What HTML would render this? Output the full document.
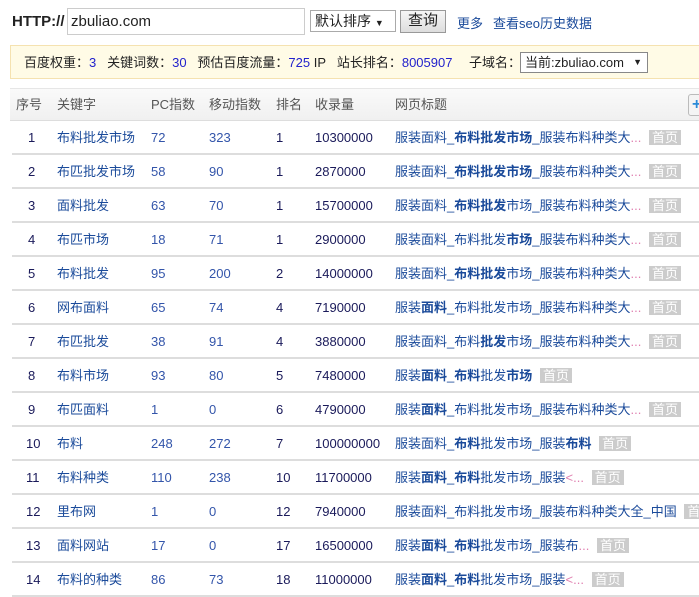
<!DOCTYPE html>
<html><head><meta charset="utf-8"><style>
*{margin:0;padding:0;box-sizing:border-box}
body{width:699px;height:582px;overflow:hidden;background:#fff;font-family:"Liberation Sans","Noto Sans CJK SC",sans-serif;font-size:13px;position:relative;color:#222}
.a{position:absolute;white-space:nowrap}
.lnk{color:#1a4a9a}
.bar{position:absolute;left:10px;top:45px;width:700px;height:34px;background:#fffbe6;border:1px solid #f5e2b0}
.hd{position:absolute;left:10px;top:88px;width:700px;height:33px;background:linear-gradient(#fafafa,#f0f0f0);border-top:1px solid #e6e6e6;border-bottom:1px solid #ddd;color:#555}
.row{position:absolute;left:12px;width:700px;height:34px;border-bottom:2px solid #ddd}
.row span{position:absolute;top:9px;white-space:nowrap}
.row span.k,.row span.t{top:6px}
.n{color:#1a1a5a}.k{color:#1a4a9a}.p{color:#3355aa}.r{color:#1a1a5a}
.t{color:#1a4a9a}.t b{font-weight:bold}
.bd{background:#ccc;color:#fff;padding:0 3px;margin-left:4px;font-size:13px;font-style:normal}
.dt{color:#e080b0;font-style:normal}
</style></head><body>
<div class="a" style="left:12px;top:13px;font-weight:bold;font-size:15px">HTTP://</div>
<div class="a" style="left:67px;top:8px;width:238px;height:27px;border:1px solid #ccc;padding:4px 3px;font-size:15px">zbuliao.com</div>
<div class="a" style="left:310px;top:10px;width:86px;height:22px;border:1px solid #aaa;padding:0 4px;font-size:14px;line-height:20px">默认排序 <span style="font-size:9px">▼</span></div>
<div class="a" style="left:400px;top:10px;width:46px;height:23px;border:1px solid #999;background:linear-gradient(#f6f6f6,#ddd);text-align:center;font-size:15px;line-height:20px">查询</div>
<div class="a lnk" style="left:457px;top:13px">更多</div>
<div class="a lnk" style="left:493px;top:13px">查看seo历史数据</div>
<div class="bar"></div>
<div class="a" style="left:24px;top:52px">百度权重：<span style="color:#22c">3</span>&nbsp;&nbsp; 关键词数：<span style="color:#22c">30</span>&nbsp;&nbsp; 预估百度流量：<span style="color:#22c">725</span> IP&nbsp;&nbsp; 站长排名：<span style="color:#22c">8005907</span></div>
<div class="a" style="left:469px;top:52px">子域名：</div>
<div class="a" style="left:520px;top:52px;width:128px;height:21px;border:1px solid #888;background:#fff;padding:0 4px;line-height:19px">当前:zbuliao.com <span style="position:absolute;right:5px;top:0;font-size:9px">▼</span></div>
<div class="hd"></div>
<div class="a" style="left:16px;top:94px;color:#555">序号</div>
<div class="a" style="left:57px;top:94px;color:#555">关键字</div>
<div class="a" style="left:151px;top:94px;color:#555">PC指数</div>
<div class="a" style="left:209px;top:94px;color:#555">移动指数</div>
<div class="a" style="left:276px;top:94px;color:#555">排名</div>
<div class="a" style="left:315px;top:94px;color:#555">收录量</div>
<div class="a" style="left:395px;top:94px;color:#555">网页标题</div>
<div class="a" style="left:688px;top:94px;width:20px;height:22px;border:1px solid #bbb;border-radius:3px;background:#f4f4f4;color:#2a8ad8;font-weight:bold;font-size:16px;line-height:20px;padding-left:3px">+</div>
<div class="row" style="top:121px"><span class="n" style="left:16px">1</span><span class="k" style="left:45px">布料批发市场</span><span class="p" style="left:139px">72</span><span class="p" style="left:197px">323</span><span class="r" style="left:264px">1</span><span class="r" style="left:303px">10300000</span><span class="t" style="left:383px">服装面料_<b>布料批发市场</b>_服装布料种类大<i class="dt">...</i> <i class="bd">首页</i></span></div>
<div class="row" style="top:155px"><span class="n" style="left:16px">2</span><span class="k" style="left:45px">布匹批发市场</span><span class="p" style="left:139px">58</span><span class="p" style="left:197px">90</span><span class="r" style="left:264px">1</span><span class="r" style="left:303px">2870000</span><span class="t" style="left:383px">服装面料_<b>布料批发市场</b>_服装布料种类大<i class="dt">...</i> <i class="bd">首页</i></span></div>
<div class="row" style="top:189px"><span class="n" style="left:16px">3</span><span class="k" style="left:45px">面料批发</span><span class="p" style="left:139px">63</span><span class="p" style="left:197px">70</span><span class="r" style="left:264px">1</span><span class="r" style="left:303px">15700000</span><span class="t" style="left:383px">服装面料_<b>布料批发</b>市场_服装布料种类大<i class="dt">...</i> <i class="bd">首页</i></span></div>
<div class="row" style="top:223px"><span class="n" style="left:16px">4</span><span class="k" style="left:45px">布匹市场</span><span class="p" style="left:139px">18</span><span class="p" style="left:197px">71</span><span class="r" style="left:264px">1</span><span class="r" style="left:303px">2900000</span><span class="t" style="left:383px">服装面料_布料批发<b>市场</b>_服装布料种类大<i class="dt">...</i> <i class="bd">首页</i></span></div>
<div class="row" style="top:257px"><span class="n" style="left:16px">5</span><span class="k" style="left:45px">布料批发</span><span class="p" style="left:139px">95</span><span class="p" style="left:197px">200</span><span class="r" style="left:264px">2</span><span class="r" style="left:303px">14000000</span><span class="t" style="left:383px">服装面料_<b>布料批发</b>市场_服装布料种类大<i class="dt">...</i> <i class="bd">首页</i></span></div>
<div class="row" style="top:291px"><span class="n" style="left:16px">6</span><span class="k" style="left:45px">网布面料</span><span class="p" style="left:139px">65</span><span class="p" style="left:197px">74</span><span class="r" style="left:264px">4</span><span class="r" style="left:303px">7190000</span><span class="t" style="left:383px">服装<b>面料</b>_布料批发市场_服装布料种类大<i class="dt">...</i> <i class="bd">首页</i></span></div>
<div class="row" style="top:325px"><span class="n" style="left:16px">7</span><span class="k" style="left:45px">布匹批发</span><span class="p" style="left:139px">38</span><span class="p" style="left:197px">91</span><span class="r" style="left:264px">4</span><span class="r" style="left:303px">3880000</span><span class="t" style="left:383px">服装面料_布料<b>批发</b>市场_服装布料种类大<i class="dt">...</i> <i class="bd">首页</i></span></div>
<div class="row" style="top:359px"><span class="n" style="left:16px">8</span><span class="k" style="left:45px">布料市场</span><span class="p" style="left:139px">93</span><span class="p" style="left:197px">80</span><span class="r" style="left:264px">5</span><span class="r" style="left:303px">7480000</span><span class="t" style="left:383px">服装<b>面料</b>_<b>布料</b>批发<b>市场</b> <i class="bd">首页</i></span></div>
<div class="row" style="top:393px"><span class="n" style="left:16px">9</span><span class="k" style="left:45px">布匹面料</span><span class="p" style="left:139px">1</span><span class="p" style="left:197px">0</span><span class="r" style="left:264px">6</span><span class="r" style="left:303px">4790000</span><span class="t" style="left:383px">服装<b>面料</b>_布料批发市场_服装布料种类大<i class="dt">...</i> <i class="bd">首页</i></span></div>
<div class="row" style="top:427px"><span class="n" style="left:14px">10</span><span class="k" style="left:45px">布料</span><span class="p" style="left:139px">248</span><span class="p" style="left:197px">272</span><span class="r" style="left:264px">7</span><span class="r" style="left:303px">100000000</span><span class="t" style="left:383px">服装面料_<b>布料</b>批发市场_服装<b>布料</b> <i class="bd">首页</i></span></div>
<div class="row" style="top:461px"><span class="n" style="left:14px">11</span><span class="k" style="left:45px">布料种类</span><span class="p" style="left:139px">110</span><span class="p" style="left:197px">238</span><span class="r" style="left:264px">10</span><span class="r" style="left:303px">11700000</span><span class="t" style="left:383px">服装<b>面料</b>_<b>布料</b>批发市场_服装<i class="dt">&lt;...</i> <i class="bd">首页</i></span></div>
<div class="row" style="top:495px"><span class="n" style="left:14px">12</span><span class="k" style="left:45px">里布网</span><span class="p" style="left:139px">1</span><span class="p" style="left:197px">0</span><span class="r" style="left:264px">12</span><span class="r" style="left:303px">7940000</span><span class="t" style="left:383px">服装面料_布料批发市场_服装布料种类大全_中国 <i class="bd">首页</i></span></div>
<div class="row" style="top:529px"><span class="n" style="left:14px">13</span><span class="k" style="left:45px">面料网站</span><span class="p" style="left:139px">17</span><span class="p" style="left:197px">0</span><span class="r" style="left:264px">17</span><span class="r" style="left:303px">16500000</span><span class="t" style="left:383px">服装<b>面料</b>_<b>布料</b>批发市场_服装布<i class="dt">...</i> <i class="bd">首页</i></span></div>
<div class="row" style="top:563px"><span class="n" style="left:14px">14</span><span class="k" style="left:45px">布料的种类</span><span class="p" style="left:139px">86</span><span class="p" style="left:197px">73</span><span class="r" style="left:264px">18</span><span class="r" style="left:303px">11000000</span><span class="t" style="left:383px">服装<b>面料</b>_<b>布料</b>批发市场_服装<i class="dt">&lt;...</i> <i class="bd">首页</i></span></div>
</body></html>
